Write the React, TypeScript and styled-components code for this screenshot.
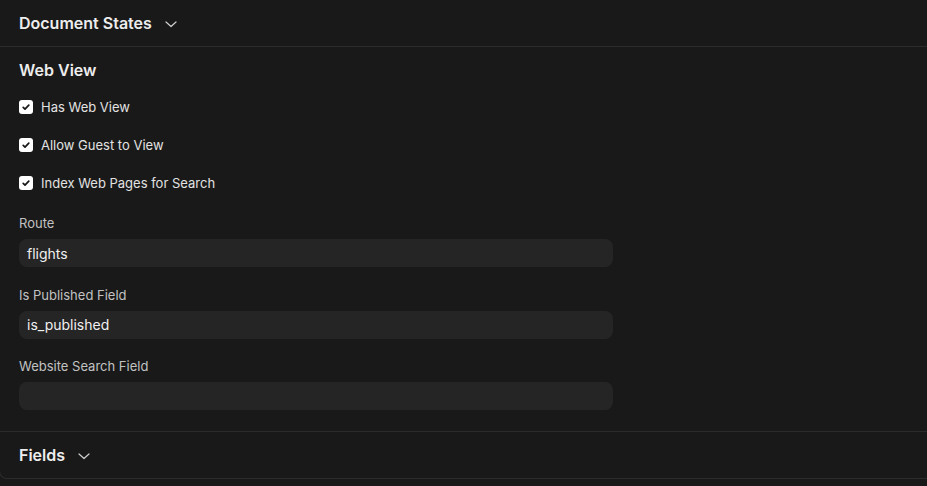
import React from "react";
import styled, { createGlobalStyle } from "styled-components";

const Global = createGlobalStyle`
  html, body { margin: 0; padding: 0; background: #191919; }
  body { font-family: Inter, "Noto Sans", sans-serif; -webkit-font-smoothing: antialiased; }
`;

const Page = styled.div`
  width: 927px;
  height: 486px;
  background: #191919;
  overflow: hidden;
`;

const Card = styled.div`
  margin-left: -1px;
  border: 1px solid #2c2c2c;
  border-top: none;
  border-right: none;
  border-bottom-left-radius: 8px;
  display: flex;
  flex-direction: column;
`;

const CollapsedSection = styled.div<{ $last?: boolean }>`
  height: 46px;
  padding: 0 19px;
  display: flex;
  align-items: center;
  gap: 11px;
  border-bottom: ${(p) => (p.$last ? "none" : "1px solid #2c2c2c")};
`;

const SectionTitle = styled.div`
  font-size: 16px;
  font-weight: 600;
  color: #ededed;
  line-height: 24px;
`;

const Chevron = styled.svg`
  width: 16px;
  height: 16px;
  margin-top: 2px;
  color: #cfcfcf;
`;

const Section = styled.div`
  padding: 11px 19px 21px;
  border-bottom: 1px solid #2c2c2c;
  display: flex;
  flex-direction: column;
`;

const Checks = styled.div`
  display: flex;
  flex-direction: column;
  gap: 20px;
  margin-top: 16px;
`;

const CheckRow = styled.label`
  display: flex;
  align-items: center;
  gap: 8px;
  height: 18px;
  font-size: 13px;
  color: #e2e2e2;
`;

const Box = styled.span`
  width: 14px;
  height: 14px;
  border-radius: 3px;
  background: #ffffff;
  display: flex;
  align-items: center;
  justify-content: center;
`;

const Fields = styled.div`
  display: flex;
  flex-direction: column;
  gap: 18.5px;
  margin-top: 22px;
`;

const Field = styled.div`
  display: flex;
  flex-direction: column;
  gap: 7px;
`;

const Label = styled.div`
  font-size: 13px;
  line-height: 18px;
  color: #c2c2c2;
`;

const Input = styled.div`
  width: 594px;
  height: 28px;
  box-sizing: border-box;
  border-radius: 8px;
  background: #252525;
  padding: 0 8px;
  display: flex;
  align-items: center;
  font-size: 14px;
  color: #f0f0f0;
`;

const ChevronDown = () => (
  <Chevron viewBox="0 0 16 16" fill="none">
    <path d="M3 6l5 4.5 5-4.5" stroke="currentColor" strokeWidth="1.2" strokeLinecap="round" strokeLinejoin="round" />
  </Chevron>
);

const Check = ({ label }: { label: string }) => (
  <CheckRow>
    <Box>
      <svg width="10" height="10" viewBox="0 0 10 10" fill="none">
        <path d="M2.2 5.3l1.8 1.8 3.8-4" stroke="#171717" strokeWidth="1.7" strokeLinecap="round" strokeLinejoin="round" />
      </svg>
    </Box>
    {label}
  </CheckRow>
);

export default function App() {
  return (
    <Page>
      <Global />
      <Card>
        <CollapsedSection>
          <SectionTitle>Document States</SectionTitle>
          <ChevronDown />
        </CollapsedSection>
        <Section>
          <SectionTitle>Web View</SectionTitle>
          <Checks>
            <Check label="Has Web View" />
            <Check label="Allow Guest to View" />
            <Check label="Index Web Pages for Search" />
          </Checks>
          <Fields>
            <Field>
              <Label>Route</Label>
              <Input>flights</Input>
            </Field>
            <Field>
              <Label>Is Published Field</Label>
              <Input>is_published</Input>
            </Field>
            <Field>
              <Label>Website Search Field</Label>
              <Input />
            </Field>
          </Fields>
        </Section>
        <CollapsedSection $last>
          <SectionTitle>Fields</SectionTitle>
          <ChevronDown />
        </CollapsedSection>
      </Card>
    </Page>
  );
}
